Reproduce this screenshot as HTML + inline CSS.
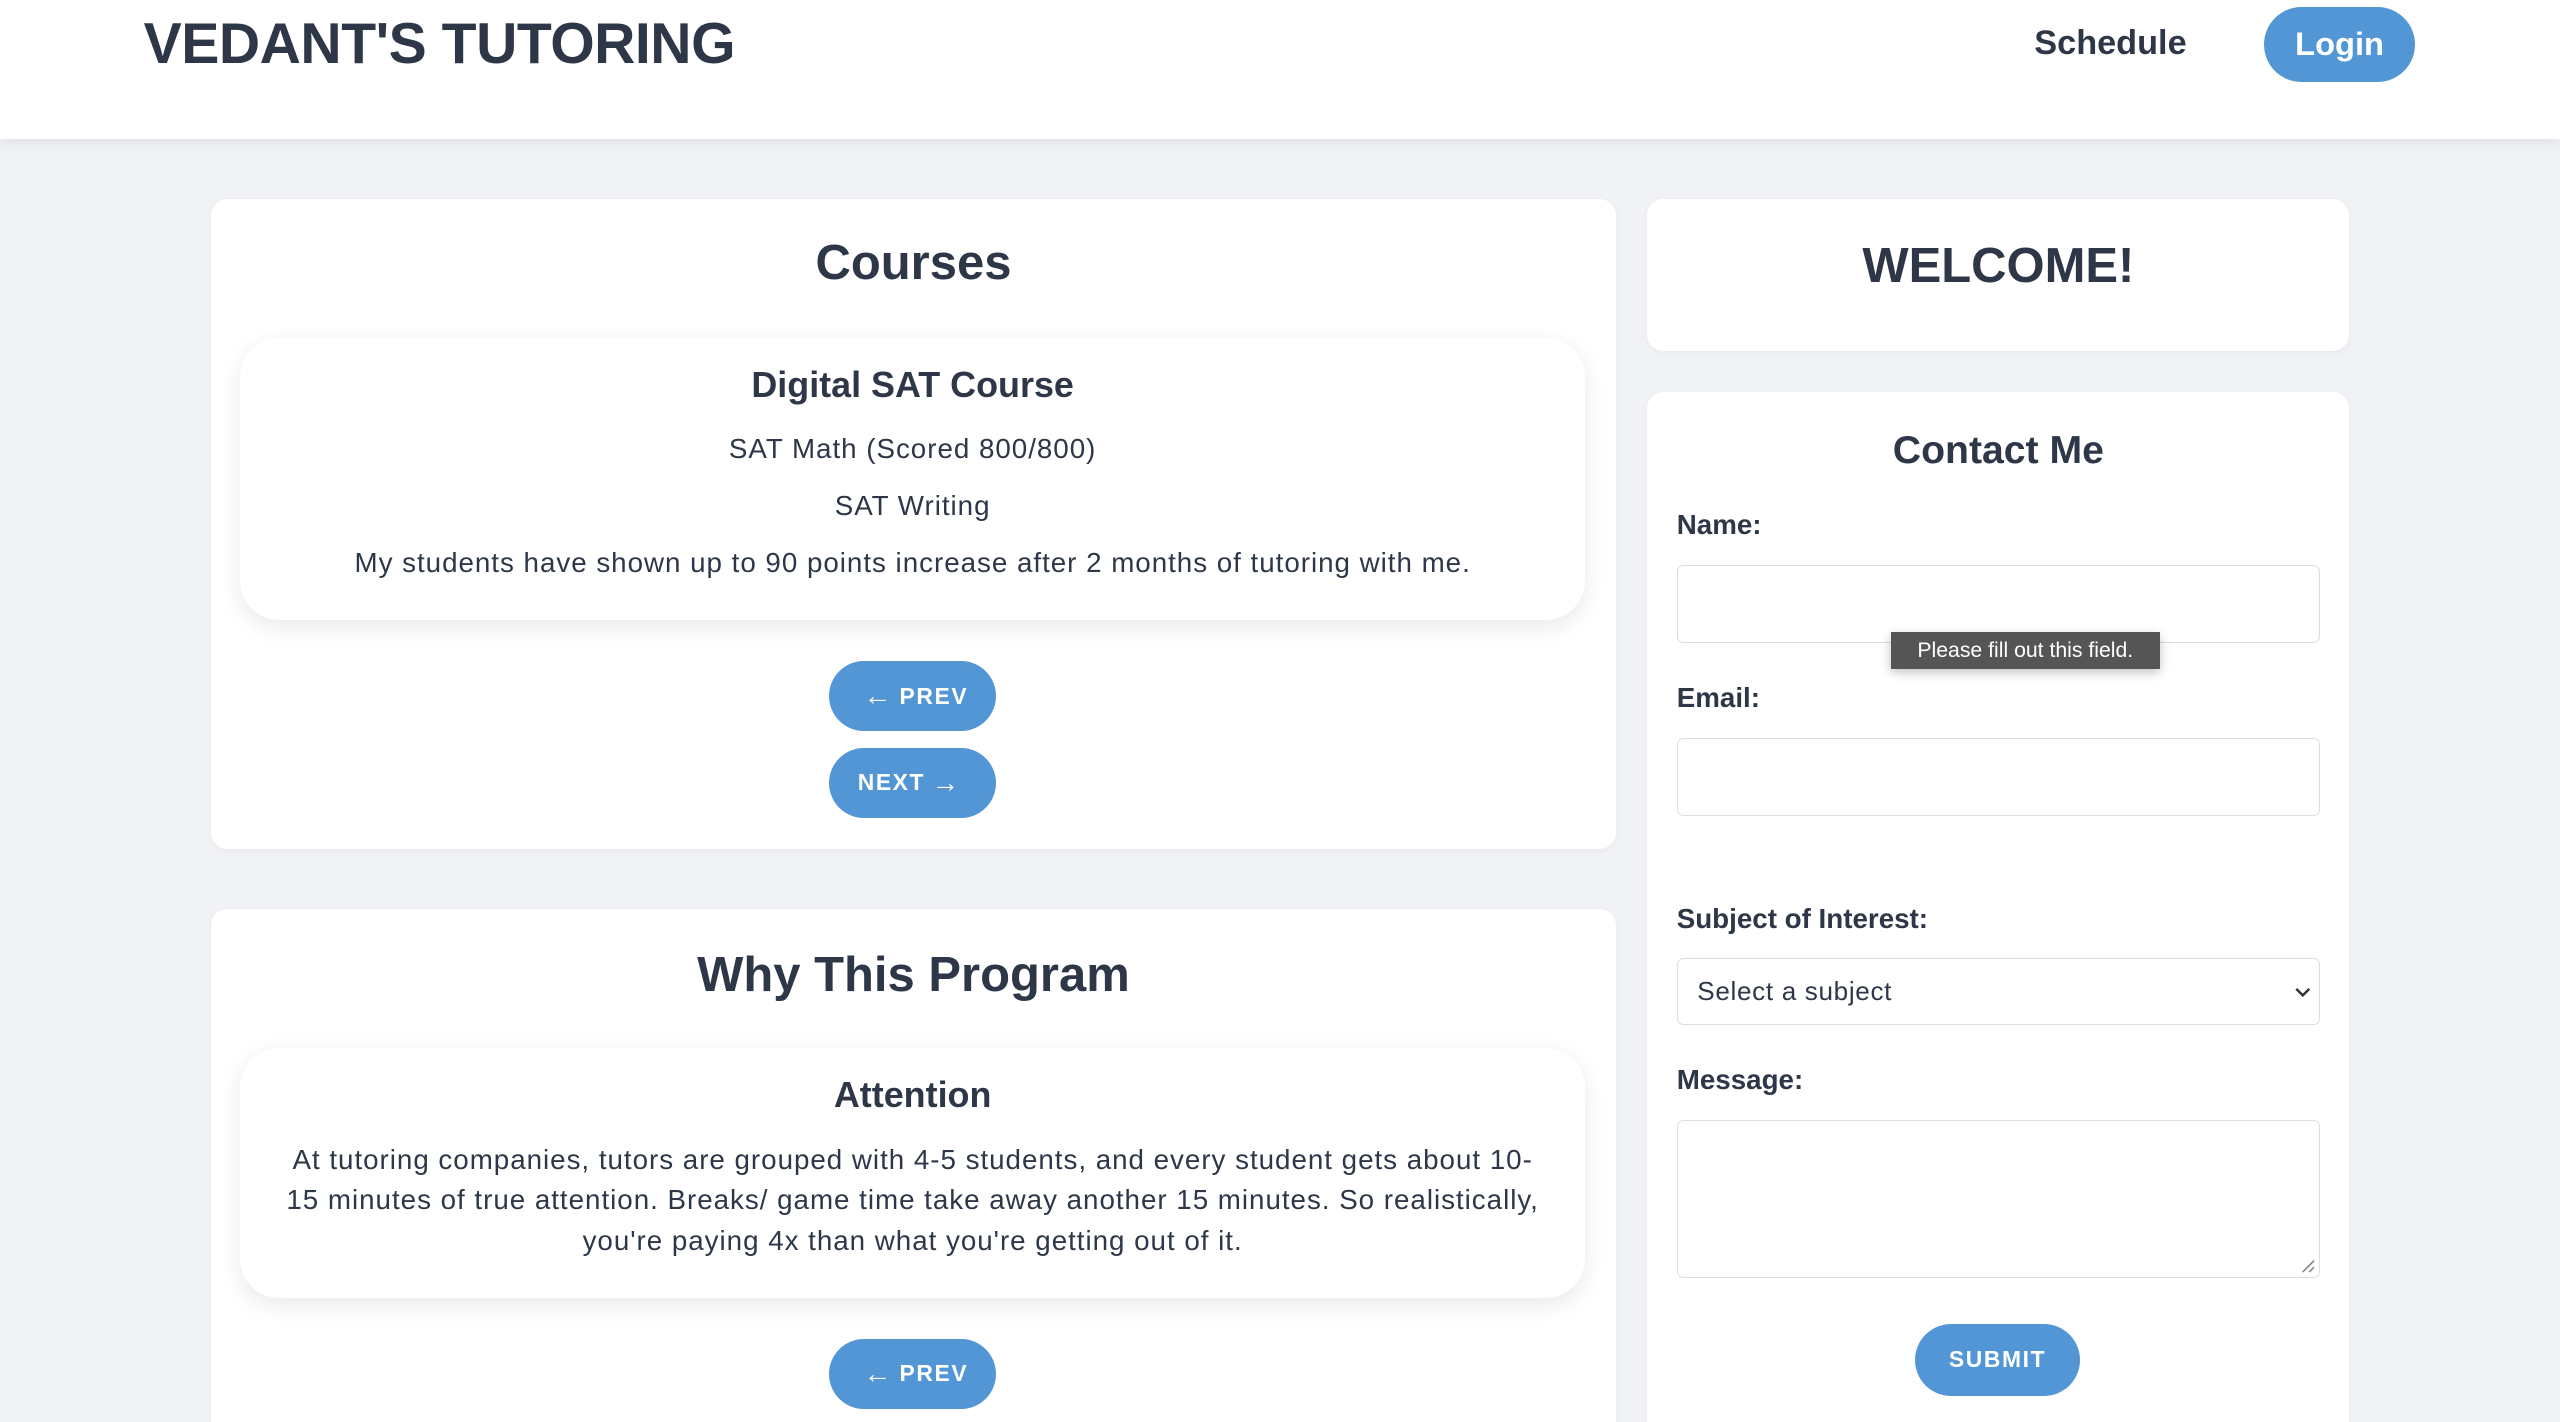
<!DOCTYPE html>
<html><head><meta charset="utf-8">
<style>
html,body{margin:0;padding:0;background:#f0f2f5;width:2560px;height:1422px;overflow:hidden}
#w{zoom:1.63265;width:1568px;height:871px;position:relative;font-family:"Liberation Sans",sans-serif;color:#2d3748}
.hdr{position:absolute;left:0;top:0;width:1568px;height:85px;background:#fff;box-shadow:0 2px 8px rgba(0,0,0,.08)}
.abs{position:absolute}
.title{left:88px;top:7px;font-size:35px;font-weight:bold;letter-spacing:-0.3px}
.sched{left:1246px;top:15px;font-size:21px;font-weight:bold;color:#2d3748}
.btn{position:absolute;background:#5296d5;color:#fff;border-radius:23px;display:flex;align-items:center;justify-content:center;font-weight:bold}
.card{position:absolute;background:#fff;border-radius:10px;box-shadow:0 1px 4px rgba(0,0,0,.04)}
.inner{position:absolute;background:#fff;border-radius:24px;box-shadow:0 4px 14px rgba(0,0,0,.09);text-align:center}
.c{text-align:center;position:absolute;left:0;right:0}
.t{font-size:17px;letter-spacing:0.6px}
.small{font-size:14px;letter-spacing:1px}
.ar{font-size:17px;font-weight:normal;margin:0 4px}
.lbl{position:absolute;left:18px;font-size:17px;font-weight:bold}
.inp{position:absolute;left:18px;width:394px;border:1px solid #ddd;border-radius:4px;background:#fff;box-sizing:border-box}
</style></head><body><div id="w">
<div class="hdr">
<div class="abs title">VEDANT'S TUTORING</div>
<div class="abs sched">Schedule</div>
<div class="btn" style="left:1387px;top:4px;width:92px;height:46px;font-size:20px">Login</div>
</div>

<div class="card" style="left:129px;top:122px;width:861px;height:398px">
<div class="c" style="top:22px;font-size:30px;font-weight:bold">Courses</div>
<div class="inner" style="left:18px;top:85px;width:824px;height:173px">
<div class="c" style="top:16px;font-size:22px;font-weight:bold">Digital SAT Course</div>
<div class="c t" style="top:58px">SAT Math (Scored 800/800)</div>
<div class="c t" style="top:93px">SAT Writing</div>
<div class="c t" style="top:128px">My students have shown up to 90 points increase after 2 months of tutoring with me.</div>
</div>
<div class="btn small" style="left:379px;top:283px;width:102px;height:43px"><span class="ar">←</span>PREV</div>
<div class="btn small" style="left:379px;top:336px;width:102px;height:43px">NEXT<span class="ar">→</span></div>
</div>

<div class="card" style="left:129px;top:557px;width:861px;height:340px">
<div class="c" style="top:23px;font-size:30px;font-weight:bold">Why This Program</div>
<div class="inner" style="left:18px;top:85px;width:824px;height:153px">
<div class="c" style="top:16px;font-size:22px;font-weight:bold">Attention</div>
<div class="c t" style="top:56px;line-height:25px;white-space:nowrap">At tutoring companies, tutors are grouped with 4-5 students, and every student gets about 10-<br>15 minutes of true attention. Breaks/ game time take away another 15 minutes. So realistically,<br>you're paying 4x than what you're getting out of it.</div>
</div>
<div class="btn small" style="left:379px;top:263px;width:102px;height:43px"><span class="ar">←</span>PREV</div>
</div>

<div class="card" style="left:1009px;top:122px;width:430px;height:93px">
<div class="c" style="top:24px;font-size:30px;font-weight:bold">WELCOME!</div>
</div>

<div class="card" style="left:1009px;top:240px;width:430px;height:660px">
<div class="c" style="top:23px;font-size:24px;font-weight:bold">Contact Me</div>
<div class="lbl" style="top:72px">Name:</div>
<div class="inp" style="top:106px;height:48px"></div>
<div class="lbl" style="top:178px">Email:</div>
<div class="inp" style="top:212px;height:48px"></div>
<div class="lbl" style="top:313px">Subject of Interest:</div>
<div class="inp" style="top:347px;height:41px;font-size:16px;padding:10px 12px;letter-spacing:0.4px">Select a subject<svg style="position:absolute;right:4px;top:15px" width="12" height="10" viewBox="0 0 12 10"><path d="M2 3l4 4 4-4" fill="none" stroke="#333" stroke-width="1.5"/></svg></div>
<div class="lbl" style="top:412px">Message:</div>
<div class="inp" style="top:446px;height:97px"><svg style="position:absolute;right:2px;bottom:2px" width="9" height="9"><path d="M1 8L8 1M5 8L8 5" stroke="#888"/></svg></div>
<div class="btn small" style="left:164px;top:571px;width:101px;height:44px">SUBMIT</div>
<div style="position:absolute;left:149px;top:147px;width:165px;height:23px;background:#555;color:#fff;font-size:13px;display:flex;align-items:center;justify-content:center;box-shadow:0 2px 6px rgba(0,0,0,.25)">Please fill out this field.</div>
</div>
</div></body></html>
